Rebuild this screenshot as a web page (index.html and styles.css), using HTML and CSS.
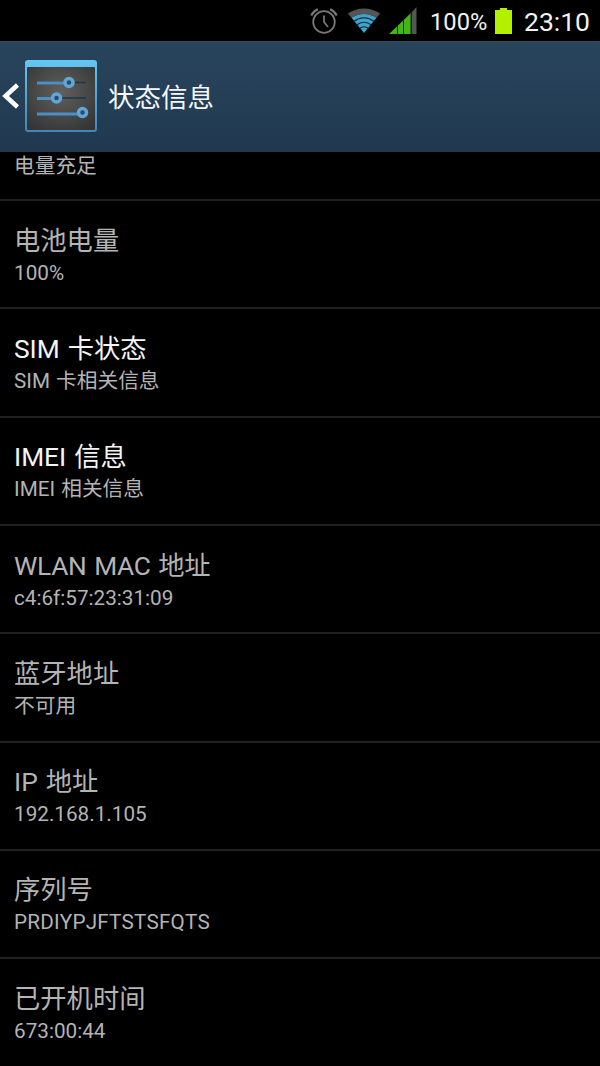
FILE: index.html
```
<!DOCTYPE html>
<html lang="zh-CN">
<head>
<meta charset="UTF-8">
<meta name="viewport" content="width=device-width, initial-scale=1.0">
<title>状态信息</title>
<link rel="stylesheet" href="styles.css">
</head>
<body>
  <div class="statusbar">
    <svg class="alarm" width="28" height="28" viewBox="0 0 28 28" fill="none" stroke="#777" stroke-width="1.8">
      <circle cx="14" cy="15" r="10.8"/>
      <path d="M14 8.5V15l4 5"/>
      <path d="M1.2 8.5Q3.5 4 8 2.3M26.8 8.5Q24.5 4 20 2.3" stroke-width="2"/>
    </svg>
    <svg class="wifi" width="34" height="26" viewBox="0 0 34 26">
      <path d="M.8 5.5Q17-4.5 33.2 5.5L29.5 9.8Q17 2 4.5 9.8Z" fill="#555"/>
      <path d="M4.5 9.8Q17 2 29.5 9.8L17 25Z" fill="#3fa3cc"/>
      <path d="M6.5 13.5Q17 6 27.5 13.5M9.5 17Q17 11.5 24.5 17M12.5 20.5Q17 17 21.5 20.5" fill="none" stroke="#0b2835" stroke-width="1.2"/>
    </svg>
    <svg class="signal" width="28" height="27" viewBox="0 0 28 27">
      <path d="M0 27L22 6V27Z" fill="#43b516"/>
      <path d="M22.5 5.5L27.5 0V27H22.5Z" fill="#555"/>
      <path d="M8.500 18V27M14.500 12V27M22 5V27" stroke="#0a2502" stroke-width="1"/>
    </svg>
    <span class="percent">100%</span>
    <svg class="battery" width="17" height="26" viewBox="0 0 17 26">
      <path d="M5 0H12V2H17V26H0V2H5Z" fill="#b2f000"/>
    </svg>
    <span class="clock">23:10</span>
  </div>

  <div class="header">
    <svg class="back" width="17" height="26" viewBox="0 0 17 26">
      <path d="M15.5 2L3.5 13L15.5 24" fill="none" stroke="#fff" stroke-width="4.5"/>
    </svg>
    <svg class="settings" width="72" height="72" viewBox="0 0 72 72">
      <defs>
        <radialGradient id="panel" cx="50%" cy="40%" r="70%">
          <stop offset="0" stop-color="#62605e"/>
          <stop offset="1" stop-color="#333536"/>
        </radialGradient>
        <linearGradient id="edge" x1="0" y1="0" x2="0" y2="1">
          <stop offset="0" stop-color="#62c8f5"/>
          <stop offset="1" stop-color="#4384b5"/>
        </linearGradient>
      </defs>
      <rect width="72" height="72" rx="3" fill="url(#edge)"/>
      <rect x="2" y="7" width="68" height="63" rx="1" fill="url(#panel)"/>
      <path d="M12 22.5H61M12 38H61" stroke="#1e3548" stroke-width="1.5"/>
      <path d="M12 23H44M12 38.5H31M12 54H57" stroke="#4b8fc4" stroke-width="3.2"/>
      <g fill="#2b4a64" stroke="#62a6d8" stroke-width="3.5">
        <circle cx="44" cy="22.5" r="4"/>
        <circle cx="31.5" cy="38" r="4"/>
        <circle cx="57.5" cy="52.5" r="4"/>
      </g>
    </svg>
    <h1>状态信息</h1>
  </div>

  <div class="list">
    <div class="item cut">
      <div class="summary">电量充足</div>
    </div>
    <div class="item">
      <div class="title">电池电量</div>
      <div class="summary">100%</div>
    </div>
    <div class="item enabled">
      <div class="title">SIM 卡状态</div>
      <div class="summary">SIM 卡相关信息</div>
    </div>
    <div class="item enabled">
      <div class="title">IMEI 信息</div>
      <div class="summary">IMEI 相关信息</div>
    </div>
    <div class="item">
      <div class="title mac">WLAN MAC 地址</div>
      <div class="summary">c4:6f:57:23:31:09</div>
    </div>
    <div class="item">
      <div class="title">蓝牙地址</div>
      <div class="summary">不可用</div>
    </div>
    <div class="item">
      <div class="title">IP 地址</div>
      <div class="summary">192.168.1.105</div>
    </div>
    <div class="item">
      <div class="title">序列号</div>
      <div class="summary serial">PRDIYPJFTSTSFQTS</div>
    </div>
    <div class="item">
      <div class="title">已开机时间</div>
      <div class="summary">673:00:44</div>
    </div>
  </div>
</body>
</html>
```
FILE: styles.css
```
* {
  box-sizing: border-box;
}
body {
  margin: 0;
  height: 1066px;
  background-color: #000;
  color: #b4b4b4;
  font-family: Roboto, "Noto Sans CJK SC", sans-serif;
  overflow: hidden;
}
svg {
  display: block;
  flex: none;
}
.statusbar {
  display: flex;
  align-items: center;
  justify-content: flex-end;
  height: 41px;
  padding-right: 10px;
  color: #f2f2f2;
}
.wifi {
  margin-left: 9px;
}
.signal {
  margin: 0 13px 0 8px;
}
.percent {
  width: 57px;
  margin-top: 3px;
  font-size: 23.7px;
  white-space: nowrap;
}
.battery {
  margin: 0 12px 0 8px;
}
.clock {
  margin-top: 1px;
  font-size: 26.5px;
}
.header {
  display: flex;
  align-items: center;
  height: 111px;
  padding: 0 0 4px 2px;
  background: linear-gradient(#28445b, #203951);
  border-top: 2px solid #31485a;
}
.settings {
  margin-left: 6px;
}
h1 {
  margin: 0 0 0 11px;
  font-size: 26.5px;
  font-weight: 400;
  color: #f4f8fb;
}
.list {
  display: flow-root;
}
.item {
  height: 108.3px;
  padding: 23.5px 14px 0;
  border-bottom: 2px solid #202020;
}
.item:last-child {
  border-bottom: none;
}
.cut {
  height: 50.2px;
  padding-top: 0;
}
.cut .summary {
  margin-top: -1px;
}
.title {
  font-size: 26.3px;
  line-height: 33px;
  word-spacing: 1.5px;
}
.enabled .title {
  color: #f4f4f4;
}
.mac {
  letter-spacing: -.3px;
}
.summary {
  font-size: 20.7px;
  line-height: 31px;
  word-spacing: 1px;
}
.serial {
  font-kerning: none;
  letter-spacing: .2px;
}
```
